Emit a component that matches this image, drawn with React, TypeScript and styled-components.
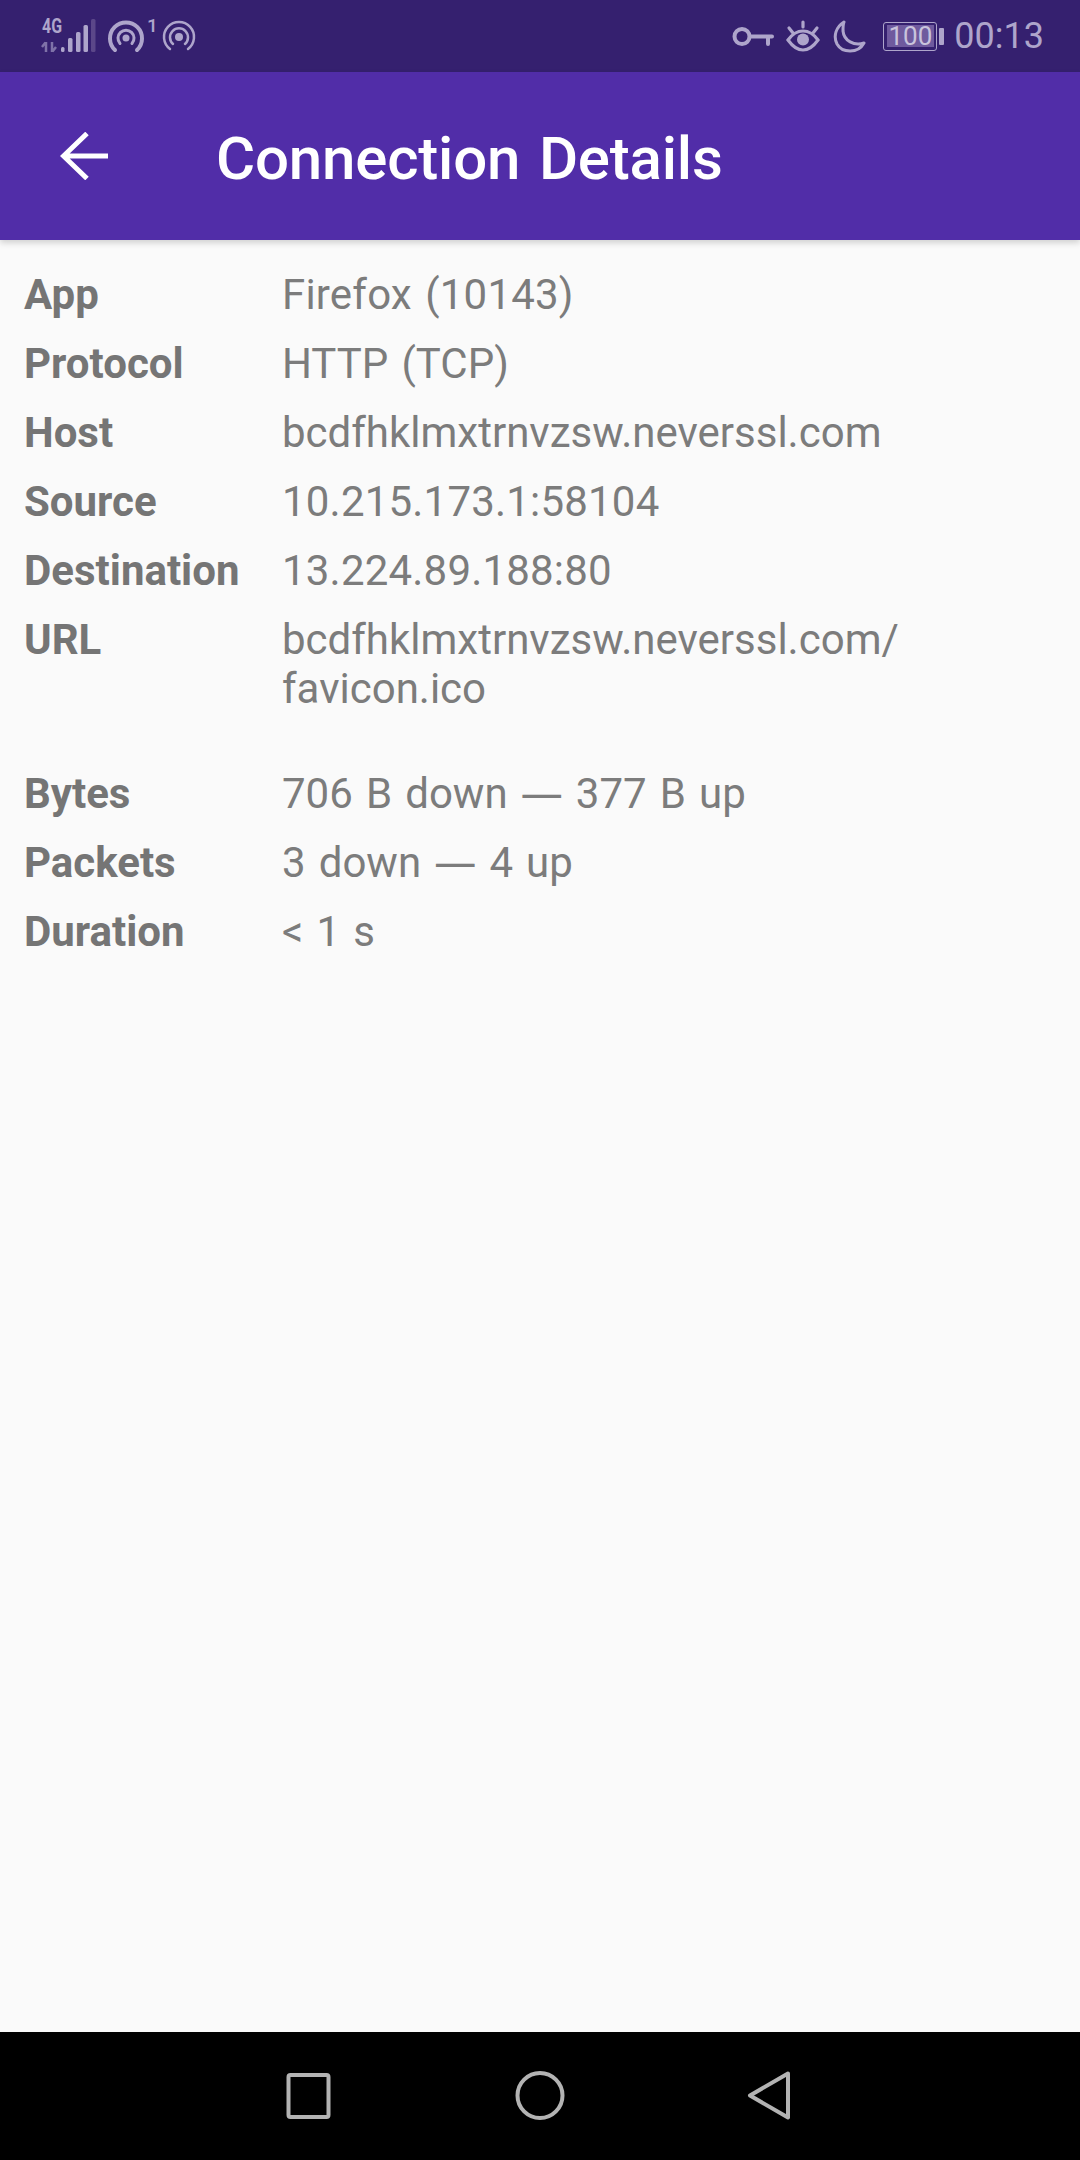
import React from "react";
import styled, { createGlobalStyle } from "styled-components";

const Global = createGlobalStyle`
  html, body { margin: 0; padding: 0; background: #fafafa; }
  #root { width: 1080px; height: 2160px; }
`;

const Screen = styled.div`
  width: 1080px;
  height: 2160px;
  display: flex;
  flex-direction: column;
  background: #fafafa;
  font-family: Roboto, "Liberation Sans", sans-serif;
  overflow: hidden;
`;

const StatusBar = styled.div`
  height: 72px;
  flex: none;
  background: #35206f;
  display: flex;
  align-items: center;
  justify-content: space-between;
  padding: 0 36px 0 41px;
`;

const StatusGroup = styled.div`
  display: flex;
  align-items: center;
`;

const Clock = styled.span`
  font-size: 36px;
  color: #aea5cb;
  margin-left: 10px;
`;

const BatteryBox = styled.div`
  width: 54px;
  height: 29px;
  box-sizing: border-box;
  border: 1.5px solid #aea5cb;
  border-radius: 3px;
  margin-left: 16px;
  padding: 2.5px;
`;

const BatteryFill = styled.div`
  width: 100%;
  height: 100%;
  background: #6f5a9e;
  display: flex;
  align-items: center;
  justify-content: center;
  font-size: 26px;
  line-height: 1;
  color: #c9c3dc;
`;

const BatteryCap = styled.div`
  width: 5px;
  height: 17px;
  margin-left: 2px;
  border-radius: 1px;
  background: #aea5cb;
`;

const AppBar = styled.header`
  height: 168px;
  flex: none;
  background: #512da8;
  display: flex;
  align-items: center;
  color: #fff;
  box-shadow: 0 3px 6px rgba(0, 0, 0, 0.16);
  position: relative;
  z-index: 1;
`;

const BackIcon = styled.svg`
  width: 50px;
  height: 48px;
  margin: 0 0 0 60px;
  flex: none;
`;

const Title = styled.h1`
  margin: 5px 0 0 106px;
  font-size: 60px;
  line-height: 68px;
  font-weight: 500;
  letter-spacing: -0.2px;
  word-spacing: 4px;
  color: #fff;
`;

const Details = styled.main`
  flex: 1;
  padding: 30px 24px 0;
  display: flex;
  flex-direction: column;
`;

const Section = styled.div<{ $gap?: number }>`
  display: flex;
  flex-direction: column;
  gap: 20px;
  margin-top: ${(p) => p.$gap ?? 0}px;
`;

const Row = styled.div`
  display: grid;
  grid-template-columns: 258px 1fr;
  font-size: 42px;
  line-height: 49px;
  color: #757575;
`;

const Label = styled.div`
  font-weight: 700;
`;

const Value = styled.div<{ $digits?: boolean }>`
  font-weight: 400;
  color: #7c7c7c;
  word-spacing: 2.7px;
  letter-spacing: ${(p) => (p.$digits ? "0.2px" : "0")};
`;

const Dash = styled.span`
  font-family: "Noto Sans", sans-serif;
  line-height: 0;
`;

const NavBar = styled.nav`
  height: 128px;
  flex: none;
  background: #000;
  display: flex;
  align-items: center;
  justify-content: center;
  gap: 181px;
`;

const NavIcon = styled.svg`
  width: 50px;
  height: 52px;
  display: block;
`;

const Icon = styled.svg<{ $ml?: number }>`
  display: block;
  margin-left: ${(p) => p.$ml ?? 0}px;
`;

const c = "#aea5cb";

const Signal = () => (
  <Icon width="56" height="44" viewBox="0 -4 56 44">
    <text x="1" y="15" fontFamily="Roboto" fontWeight="700" fontSize="20" fill={c} textLength="20" lengthAdjust="spacingAndGlyphs">4G</text>
    <path d="M5 24v10M1 29l3.5-4.5M11 24v10M15 29l-3.5 4.5" stroke="#7f72a8" strokeWidth="2.5" fill="none" />
    <rect x="20" y="29" width="3.5" height="5" rx="1.5" fill={c} />
    <rect x="27" y="20" width="4.5" height="14" rx="1.5" fill={c} />
    <rect x="35" y="14" width="4.5" height="20" rx="1.5" fill={c} />
    <rect x="42.5" y="7" width="4.5" height="27" rx="1.5" fill={c} />
    <rect x="50" y="1" width="4.5" height="33" rx="1.5" fill="#5b4789" />
  </Icon>
);

const Hotspot = () => (
  <Icon $ml={10} width="38" height="38" viewBox="0 0 38 38" fill="none" stroke={c} strokeLinecap="round">
    <path d="M8 33A16 16 0 1 1 30 33" strokeWidth="4" />
    <path d="M13 26.5A8 8 0 1 1 25 26.5" strokeWidth="3" />
    <circle cx="19" cy="21" r="3.5" fill={c} stroke="none" />
  </Icon>
);

const HotspotSmall = () => (
  <Icon width="34" height="34" viewBox="0 0 34 34" fill="none" stroke={c} strokeWidth="2.5" strokeLinecap="round">
    <path d="M8 30A15 15 0 1 1 26 30" />
    <path d="M11 25A9 9 0 1 1 23 25" />
    <circle cx="17" cy="18" r="4" fill={c} stroke="none" />
  </Icon>
);

const HotspotBadge = styled.span`
  font-size: 19px;
  font-weight: 500;
  line-height: 20px;
  color: ${c};
  align-self: flex-start;
  margin: 2px 4px 0 2px;
`;

const rows1: [string, React.ReactNode, boolean?][] = [
  ["App", "Firefox (10143)", true],
  ["Protocol", "HTTP (TCP)"],
  ["Host", "bcdfhklmxtrnvzsw.neverssl.com"],
  ["Source", "10.215.173.1:58104", true],
  ["Destination", "13.224.89.188:80", true],
  ["URL", <>bcdfhklmxtrnvzsw.neverssl.com/<br />favicon.ico</>],
];

const rows2: [string, React.ReactNode][] = [
  ["Bytes", <>706 B down <Dash>—</Dash> 377 B up</>],
  ["Packets", <>3 down <Dash>—</Dash> 4 up</>],
  ["Duration", "< 1 s"],
];

export default function App() {
  return (
    <Screen>
      <Global />
      <StatusBar>
        <StatusGroup>
          <Signal />
          <Hotspot />
          <HotspotBadge>1</HotspotBadge>
          <HotspotSmall />
        </StatusGroup>
        <StatusGroup>
          <Icon width="42" height="20" viewBox="0 0 42 20" fill="none" stroke={c} strokeWidth="4">
            <circle cx="10" cy="10.5" r="7.5" />
            <path d="M18 10.5H40M36 10.5V18" strokeLinecap="round" />
          </Icon>
          <Icon $ml={11} width="36" height="32" viewBox="0 0 36 32" fill="none" stroke={c} strokeWidth="3.2">
            <path d="M3 20C8 13 13 11 18 11s10 2 15 9c-5 7-10 10-15 10S8 27 3 20Z" />
            <circle cx="18" cy="19.5" r="6" fill={c} stroke="none" />
            <path d="M18 2v5M4 8l4 5M32 8l-4 5" strokeLinecap="round" />
          </Icon>
          <Icon $ml={12} width="34" height="34" viewBox="0 0 34 34" fill="none" stroke={c} strokeWidth="3">
            <path d="M11 3C3 8 0 17 4 25c5 9 21 10 27-1-10 3-20-2-21-12 0-4 0-7 1-9Z" strokeLinejoin="round" />
          </Icon>
          <BatteryBox>
            <BatteryFill>100</BatteryFill>
          </BatteryBox>
          <BatteryCap />
          <Clock>00:13</Clock>
        </StatusGroup>
      </StatusBar>
      <AppBar>
        <BackIcon viewBox="0 0 50 48" fill="none" stroke="#fff" strokeWidth="5">
          <path d="M48 24H4M27 1.5 3.5 24 27 46.5" />
        </BackIcon>
        <Title>Connection Details</Title>
      </AppBar>
      <Details>
        <Section>
          {rows1.map(([k, v, digits]) => (
            <Row key={k}>
              <Label>{k}</Label>
              <Value $digits={digits}>{v}</Value>
            </Row>
          ))}
        </Section>
        <Section $gap={56}>
          {rows2.map(([k, v]) => (
            <Row key={k}>
              <Label>{k}</Label>
              <Value>{v}</Value>
            </Row>
          ))}
        </Section>
      </Details>
      <NavBar>
        <NavIcon viewBox="0 0 50 52" fill="none" stroke="#b3b3b3" strokeWidth="4">
          <rect x="4.5" y="5" width="40" height="42" rx="2" />
        </NavIcon>
        <NavIcon viewBox="0 0 50 52" fill="none" stroke="#b3b3b3" strokeWidth="4">
          <circle cx="25" cy="25.5" r="22.5" />
        </NavIcon>
        <NavIcon viewBox="0 0 50 52" fill="none" stroke="#b3b3b3" strokeWidth="4" strokeLinejoin="round">
          <path d="M42 3.5 4 25.5 42 47.5Z" />
        </NavIcon>
      </NavBar>
    </Screen>
  );
}
